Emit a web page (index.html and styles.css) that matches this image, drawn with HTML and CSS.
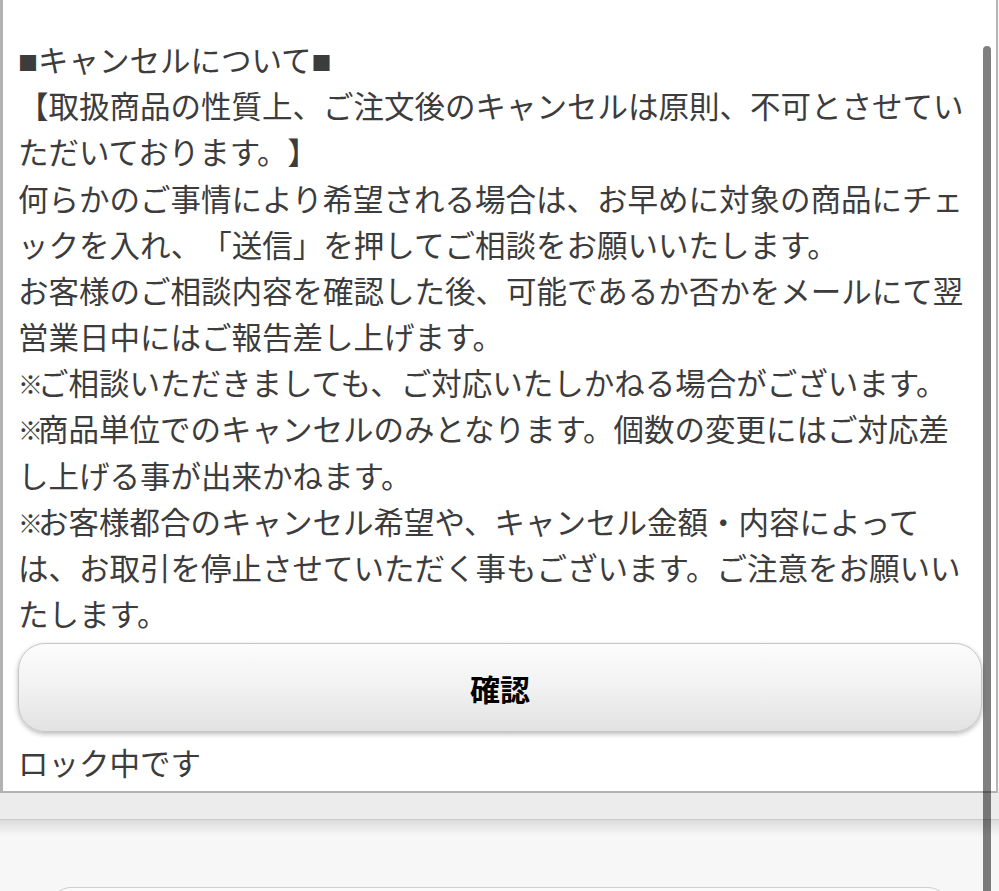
FILE: index.html
```html
<!DOCTYPE html>
<html lang="ja">
<head>
<meta charset="utf-8">
<title>キャンセルについて</title>
<link rel="stylesheet" href="styles.css">
</head>
<body>
<div class="panel">
  <p class="notice"><span class="mk">■</span>キャンセルについて<span class="mk">■</span><br>【取扱商品の性質上、ご注文後のキャンセルは原則、不可とさせてい<br>ただいております。】<br>何らかのご事情により希望される場合は、お早めに対象の商品にチェ<br>ックを入れ、「送信」を押してご相談をお願いいたします。<br>お客様のご相談内容を確認した後、可能であるか否かをメールにて翌<br>営業日中にはご報告差し上げます。<br><span class="ref">※</span>ご相談いただきましても、ご対応いたしかねる場合がございます。<br><span class="ref">※</span>商品単位でのキャンセルのみとなります。個数の変更にはご対応差<br>し上げる事が出来かねます。<br><span class="ref">※</span>お客様都合のキャンセル希望や、キャンセル金額・内容によって<br>は、お取引を停止させていただく事もございます。ご注意をお願いい<br>たします。</p>
  <button class="confirm" type="button">確認</button>
  <p class="status">ロック中です</p>
</div>
<div class="band"></div>
<div class="toolbar">
  <div class="next-btn"></div>
</div>
<div class="scrollbar"></div>
</body>
</html>
```
FILE: styles.css
```css
html, body {
  margin: 0;
  padding: 0;
}
body {
  width: 999px;
  height: 891px;
  overflow: hidden;
  background: #f7f7f7;
  font-family: "Noto Sans CJK JP", "Noto Sans", sans-serif;
  color: #3c3c3c;
  text-spacing-trim: space-all;
  font-feature-settings: "palt" 0;
}
.panel {
  box-sizing: border-box;
  width: 998px;
  background: #ffffff;
  border-left: 3px solid #b2b2b2;
  border-right: 2px solid #b6b6b6;
  border-bottom: 2px solid #b2b2b2;
  padding: 36px 14px 6px 15px;
}
.notice {
  margin: 0;
  font-size: 30.5px;
  line-height: 46.17px;
  white-space: nowrap;
}
.mk {
  font-size: 20px;
  line-height: 1;
  vertical-align: 1px;
}
.ref {
  display: inline-block;
  width: 20px;
  font-size: 25px;
  line-height: 1;
  letter-spacing: -5px;
  vertical-align: 1px;
}
.confirm {
  display: block;
  box-sizing: border-box;
  width: 100%;
  height: 89px;
  margin: 7px 0 0 0;
  padding: 0;
  border: 1px solid #c6c6c6;
  border-radius: 27px;
  background: linear-gradient(#fcfcfc, #f3f3f3 45%, #e2e2e2);
  box-shadow: 0 2px 5px rgba(0, 0, 0, 0.28);
  font-family: "Noto Sans CJK JP", sans-serif;
  font-size: 30px;
  font-weight: 700;
  color: #000;
}
.status {
  margin: 7px 0 0 0;
  font-size: 30.5px;
  line-height: 46px;
}
.band {
  height: 26px;
  background: #ececec;
}
.toolbar {
  border-top: 1px solid #c9c9c9;
  background: linear-gradient(#dcdcdc, #f7f7f7 16px);
  height: 80px;
  padding: 67px 50px 0 50px;
  box-sizing: border-box;
}
.next-btn {
  height: 40px;
  border: 1px solid #cfcfcf;
  border-radius: 26px;
  background: #fbfbfb;
}
.scrollbar {
  position: fixed;
  top: 46px;
  right: 8px;
  bottom: -10px;
  width: 8px;
  border-radius: 4px;
  background: rgba(0, 0, 0, 0.5);
}
```
